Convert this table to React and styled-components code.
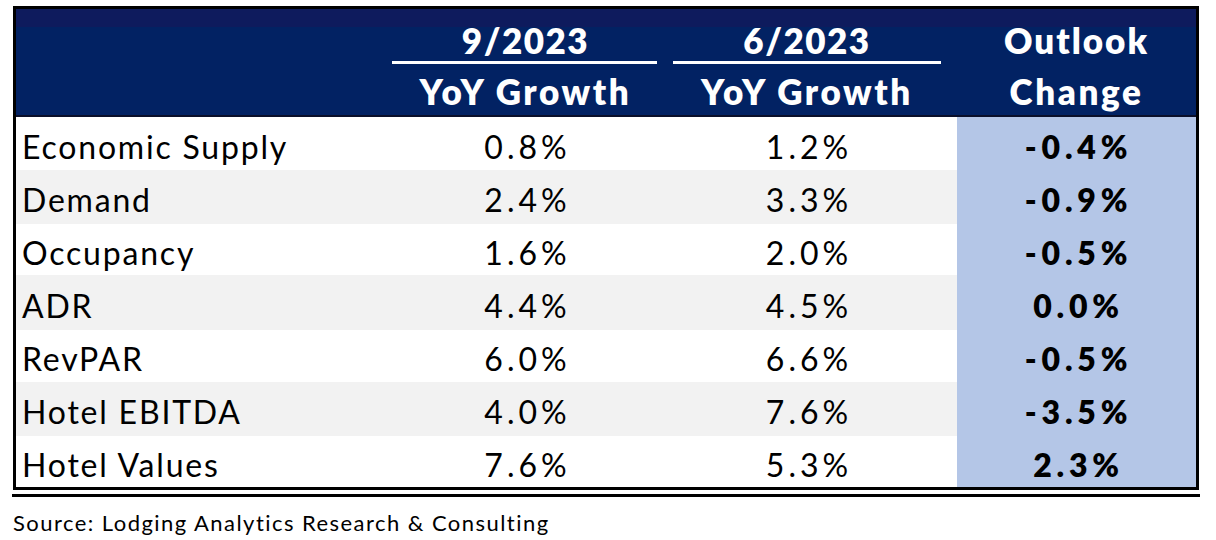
import React from "react";
import styled, { createGlobalStyle } from "styled-components";

const Global = createGlobalStyle`
  body {
    margin: 0;
    background: #ffffff;
    font-family: "Lato", "Liberation Sans", sans-serif;
  }
`;

const Page = styled.div`
  width: 1216px;
  height: 540px;
  padding: 6px 0 0 13px;
  box-sizing: border-box;
  overflow: hidden;
`;

const Table = styled.div`
  width: 1186px;
  box-sizing: border-box;
  border: 3px solid #000;
  display: grid;
  grid-template-columns: 378px 263px 300px 239px;
`;

const Head = styled.div`
  height: 108px;
  border-bottom: 2px solid #0a0f2a;
  background: linear-gradient(#0e1b5d 0 18px, #022263 18px);
  color: #fff;
  font-weight: 800;
  font-size: 35px;
  display: flex;
  flex-direction: column;
  align-items: center;
  padding-top: 10px;
  box-sizing: border-box;
`;

const HeadTop = styled.div`
  line-height: 42px;
  width: 268px;
  text-align: center;
  letter-spacing: ${(p) => (p.$rule ? "1.5px" : "2px")};
  border-bottom: ${(p) => (p.$rule ? "3px solid #fff" : "3px solid transparent")};
`;

const HeadBottom = styled.div`
  line-height: 46px;
  margin-top: 4px;
  text-align: center;
  letter-spacing: 2.6px;
`;

const Cell = styled.div`
  height: ${(p) => p.$h}px;
  display: flex;
  align-items: center;
  justify-content: ${(p) => (p.$label ? "flex-start" : "center")};
  padding: ${(p) => (p.$label ? "5px 0 0 6px" : "5px 0 0 4px")};
  box-sizing: border-box;
  font-size: 32px;
  letter-spacing: ${(p) => (p.$label ? "1.8px" : p.$bold ? "4.8px" : "4px")};
  font-weight: ${(p) => (p.$bold ? 800 : 400)};
  color: #000;
  background: ${(p) => (p.$blue ? "#b4c6e7" : p.$gray ? "#f2f2f2" : "#fff")};
`;

const Rule = styled.div`
  width: 1188px;
  height: 3px;
  margin: 4px 0 0 -1px;
  background: #000;
`;

const Source = styled.div`
  margin-top: 12px;
  font-size: 22px;
  letter-spacing: 1.45px;
  color: #000;
`;

const rows = [
  ["Economic Supply", "0.8%", "1.2%", "-0.4%"],
  ["Demand", "2.4%", "3.3%", "-0.9%"],
  ["Occupancy", "1.6%", "2.0%", "-0.5%"],
  ["ADR", "4.4%", "4.5%", "0.0%"],
  ["RevPAR", "6.0%", "6.6%", "-0.5%"],
  ["Hotel EBITDA", "4.0%", "7.6%", "-3.5%"],
  ["Hotel Values", "7.6%", "5.3%", "2.3%"],
];

const heights = [53, 54, 51, 55, 52, 54, 51];

export default function App() {
  return (
    <Page>
      <Global />
      <Table>
        <Head />
        <Head>
          <HeadTop $rule>9/2023</HeadTop>
          <HeadBottom>YoY Growth</HeadBottom>
        </Head>
        <Head>
          <HeadTop $rule>6/2023</HeadTop>
          <HeadBottom>YoY Growth</HeadBottom>
        </Head>
        <Head>
          <HeadTop>Outlook</HeadTop>
          <HeadBottom>Change</HeadBottom>
        </Head>
        {rows.map((r, i) => {
          const gray = i % 2 === 1;
          const h = heights[i];
          return (
            <React.Fragment key={r[0]}>
              <Cell $label $gray={gray} $h={h}>{r[0]}</Cell>
              <Cell $gray={gray} $h={h}>{r[1]}</Cell>
              <Cell $gray={gray} $h={h}>{r[2]}</Cell>
              <Cell $blue $bold $h={h}>{r[3]}</Cell>
            </React.Fragment>
          );
        })}
      </Table>
      <Rule />
      <Source>Source: Lodging Analytics Research &amp; Consulting</Source>
    </Page>
  );
}
